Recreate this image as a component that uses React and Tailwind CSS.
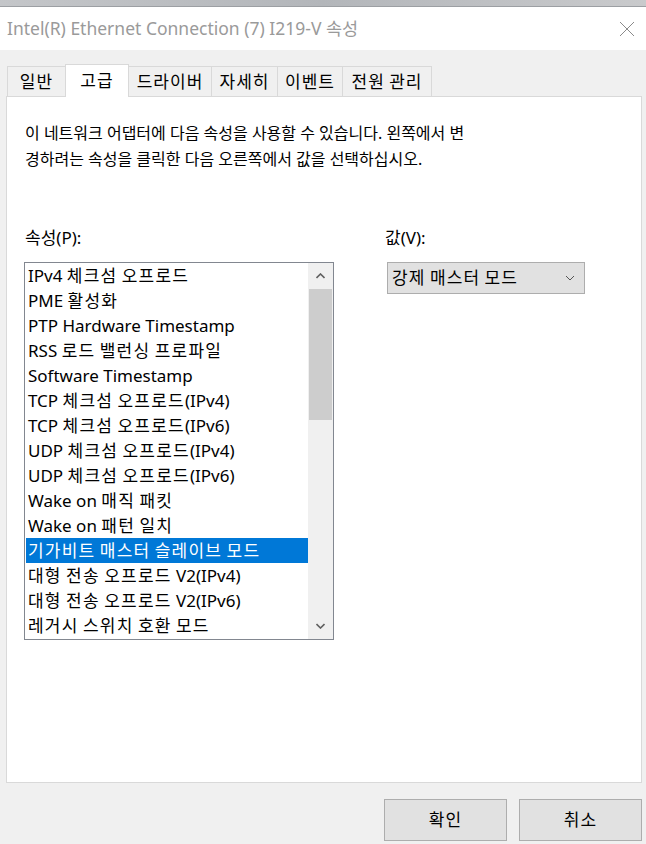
import React from "react";

const items = [
  "IPv4 체크섬 오프로드",
  "PME 활성화",
  "PTP Hardware Timestamp",
  "RSS 로드 밸런싱 프로파일",
  "Software Timestamp",
  "TCP 체크섬 오프로드(IPv4)",
  "TCP 체크섬 오프로드(IPv6)",
  "UDP 체크섬 오프로드(IPv4)",
  "UDP 체크섬 오프로드(IPv6)",
  "Wake on 매직 패킷",
  "Wake on 패턴 일치",
  "기가비트 매스터 슬레이브 모드",
  "대형 전송 오프로드 V2(IPv4)",
  "대형 전송 오프로드 V2(IPv6)",
  "레거시 스위치 호환 모드",
];

const tabs = [
  { label: "일반", w: "w-[59px]" },
  { label: "고급", w: "w-[64px]", active: true },
  { label: "드라이버", w: "w-[84px]" },
  { label: "자세히", w: "w-[67px]" },
  { label: "이벤트", w: "w-[66px]" },
  { label: "전원 관리", w: "w-[90px]" },
];

function K({ text, cls = "tracking-[1.2px]" }) {
  const parts = text.split(/([\uac00-\ud7a3]+)/);
  return (
    <>
      {parts.map((p, i) =>
        /[\uac00-\ud7a3]/.test(p) ? (
          <span key={i} className={cls}>
            {p}
          </span>
        ) : (
          <React.Fragment key={i}>{p}</React.Fragment>
        )
      )}
    </>
  );
}

export default function App() {
  return (
    <div
      className="w-[646px] h-[844px] bg-[#f0f0f0] flex flex-col overflow-hidden text-black"
      style={{ fontFamily: '"Noto Sans", "Noto Sans CJK KR", sans-serif' }}
    >
      <div className="h-[7px] shrink-0 bg-gradient-to-r from-[#c4c6c9] via-[#b3b6ba] to-[#c9cacc] border-b border-[#9c9fa3]" />
      <div className="h-[43px] shrink-0 bg-white flex items-center justify-between pl-[7px] pr-[10px]">
        <span className="text-[17.5px] text-[#9a9a9a] leading-none">
          Intel(R) Ethernet Connection (7) I219-V 속성
        </span>
        <svg width="16" height="16" viewBox="0 0 16 16" className="mr-[1px]">
          <path d="M1 1 L15 15 M15 1 L1 15" stroke="#8a8a8a" strokeWidth="1" fill="none" />
        </svg>
      </div>
      <div className="h-[14px] shrink-0" />
      <div className="flex items-end pl-[7px] h-[33px] shrink-0 relative z-10">
        {tabs.map((t, i) => (
          <div
            key={t.label}
            className={`${t.w} ${i > 0 ? "-ml-px" : ""} ${
              t.active
                ? "h-[33px] bg-white border border-b-0 border-[#d9d9d9] relative z-10"
                : "h-[30px] mb-px bg-[#f0f0f0] border border-b-0 border-[#d9d9d9]"
            } flex items-center justify-center text-[17px] leading-none`}
          >
            <span className={t.active ? "-mt-[1px]" : ""}>
              <K text={t.label} cls="tracking-[1px]" />
            </span>
          </div>
        ))}
      </div>
      <div className="-mt-px ml-[6px] w-[636px] h-[687px] shrink-0 bg-white border border-[#d9d9d9] flex flex-col">
        <div className="pl-[18px] pt-[23px] text-[16px] leading-[26px]">
          <div>이 네트워크 어댑터에 다음 속성을 사용할 수 있습니다. 왼쪽에서 변</div>
          <div>경하려는 속성을 클릭한 다음 오른쪽에서 값을 선택하십시오.</div>
        </div>
        <div className="flex pl-[17px] mt-[54px]">
          <div className="w-[310px] flex flex-col">
            <div className="h-[24px] leading-[24px] pl-[1px] text-[17px]">속성(P):</div>
            <div className="mt-[12px] h-[378px] border border-[#828790] flex">
              <div className="flex-1 flex flex-col">
                {items.map((it, i) => (
                  <div
                    key={it}
                    className={`h-[25px] leading-[25px] pl-[3px] text-[17px] whitespace-nowrap ${
                      i === 11 ? "bg-[#0078d7] text-white ml-px" : ""
                    }`}
                  >
                    <span className={i === 11 ? "-ml-px" : ""}>
                      <K text={it} />
                    </span>
                  </div>
                ))}
              </div>
              <div className="w-[25px] bg-[#f0f0f0] flex flex-col">
                <div className="h-[26px] flex items-center justify-center">
                  <svg width="9" height="6" viewBox="0 0 9 6">
                    <path d="M0.5 5 L4.5 1 L8.5 5" stroke="#606060" strokeWidth="1.6" fill="none" />
                  </svg>
                </div>
                <div className="h-[131px] bg-[#cdcdcd] mx-[1px]" />
                <div className="flex-1" />
                <div className="h-[26px] flex items-center justify-center">
                  <svg width="9" height="6" viewBox="0 0 9 6">
                    <path d="M0.5 1 L4.5 5 L8.5 1" stroke="#606060" strokeWidth="1.6" fill="none" />
                  </svg>
                </div>
              </div>
            </div>
          </div>
          <div className="ml-[51px] flex flex-col">
            <div className="h-[24px] leading-[24px] text-[17px]">값(V):</div>
            <div className="mt-[12px] ml-[2px] w-[198px] h-[32px] bg-[#e1e1e1] border border-[#adadad] flex items-center justify-between pl-[4px] pr-[9px] text-[17px]">
              <span>
                <K text="강제 매스터 모드" cls="tracking-[1.1px]" />
              </span>
              <svg width="10" height="6" viewBox="0 0 10 6">
                <path d="M1 1 L5 5 L9 1" stroke="#555" strokeWidth="1" fill="none" />
              </svg>
            </div>
          </div>
        </div>
      </div>
      <div className="flex justify-end gap-[12px] pr-[4px] mt-[16px]">
        <button className="w-[123px] h-[42px] bg-[#e1e1e1] border border-[#adadad] text-[17px]">
          <K text="확인" cls="tracking-[1px]" />
        </button>
        <button className="w-[123px] h-[42px] bg-[#e1e1e1] border border-[#adadad] text-[17px]">
          <K text="취소" cls="tracking-[1px]" />
        </button>
      </div>
    </div>
  );
}
